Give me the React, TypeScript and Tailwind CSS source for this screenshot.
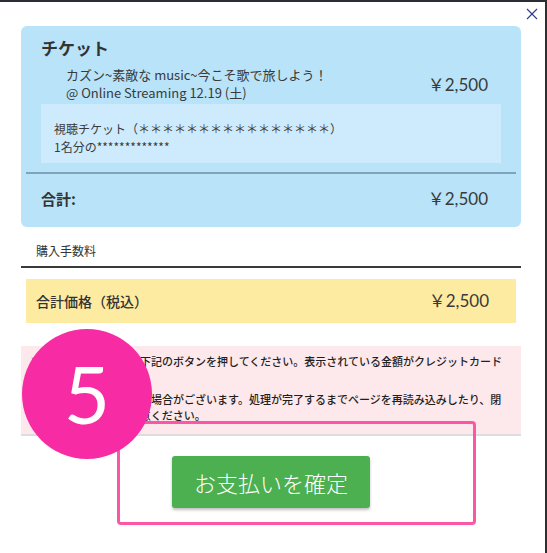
import React from 'react'

const JP = "font-['Noto_Sans_CJK_JP','Noto_Sans',sans-serif]"
const PRICE = "font-['Lato','Noto_Sans_CJK_JP',sans-serif]"

function Price({ className = '' }: { className?: string }) {
  return <span className={`${PRICE} text-[17px] text-[#3a3a3a] ${className}`}>￥2,500</span>
}

export default function App() {
  return (
    <div className={`relative w-[547px] h-[553px] bg-white border-t-2 border-r-2 border-[#2b2f33] overflow-hidden ${JP}`}>
      {/* close */}
      <button className="absolute right-[7px] top-[6px] w-[12px] h-[12px]">
        <svg viewBox="0 0 12 12" className="w-[12px] h-[12px]">
          <path d="M1 1 L11 11 M11 1 L1 11" stroke="#2b3a8c" strokeWidth="1.1" />
        </svg>
      </button>

      <div className="ml-[21px] w-[500px] pt-[24px]">
        {/* ticket card */}
        <div className="rounded-[6px] bg-[#b8e3f9] h-[201px] flex flex-col">
          <div className="pl-[20px] pt-[10px] text-[17px] font-bold text-[#333] leading-[24px]">チケット</div>
          <div className="flex items-center justify-between pl-[45px] pr-[33px] mt-[6px]">
            <div className="text-[13px] leading-[18px] text-[#3a3a3a]">
              <div>カズン~素敵な music~今こそ歌で旅しよう！</div>
              <div>@ Online Streaming 12.19 (土)</div>
            </div>
            <Price className="mt-[2px]" />
          </div>
          <div className="mx-[20px] mt-[2px] h-[59px] bg-[#cdebfc] pl-[13px] pt-[16px] text-[12px] leading-[18px] text-[#3a3a3a]">
            <div>視聴チケット（＊＊＊＊＊＊＊＊＊＊＊＊＊＊＊＊）</div>
            <div>1名分の*************</div>
          </div>
          <div className="mx-[5px] mt-[9px] h-[2px] bg-[#7fa3b8]" />
          <div className="flex items-center justify-between pl-[20px] pr-[33px] h-[50px]">
            <span className="text-[15px] font-bold text-[#333]">合計:</span>
            <Price />
          </div>
        </div>

        <div className="h-[39px] pl-[15px] pt-[15px] text-[12px] leading-[18px] text-[#333]">購入手数料</div>
        <div className="h-[2px] bg-[#3a3a3a]" />

        {/* total */}
        <div className="mx-[5px] mt-[11px] h-[44px] bg-[#feeba2] flex items-center justify-between pl-[10px] pr-[27px]">
          <span className="text-[14px] font-medium text-[#333]">合計価格（税込）</span>
          <Price />
        </div>

        {/* notice */}
        <div className="mt-[23px] h-[90px] bg-[#fde8eb] border-b-2 border-[#dddddd] pl-[9px] pt-[7px] text-[11px] leading-[16px] font-medium text-[#1f1f1f] whitespace-nowrap">
          <p>※内容をご確認の上、下記のボタンを押してください。表示されている金額がクレジットカード<br />より決済されます。</p>
          <p className="mt-[6px]">決済処理に時間がかかる場合がございます。処理が完了するまでページを再読み込みしたり、閉<br />じたりしないようご注意ください。</p>
        </div>

        <div className="flex justify-center pt-[20px]">
          <button className="w-[198px] h-[52px] rounded-[3px] bg-[#4caf50] text-white text-[22px] font-light shadow-[0_2px_3px_rgba(0,0,0,0.25)]">
            お支払いを確定
          </button>
        </div>
      </div>

      {/* highlight frame */}
      <div className="absolute left-[117px] top-[419px] w-[359px] h-[104px] border-[3px] border-[#fd56a6] rounded-[4px]" />

      {/* step badge */}
      <div className="absolute left-[22px] top-[327px] w-[130px] h-[130px] rounded-full bg-[#f72ba3] flex items-center justify-center">
        <span className="font-['Lato',sans-serif] text-[80px] leading-none text-white -mt-[2px]">5</span>
      </div>
    </div>
  )
}
